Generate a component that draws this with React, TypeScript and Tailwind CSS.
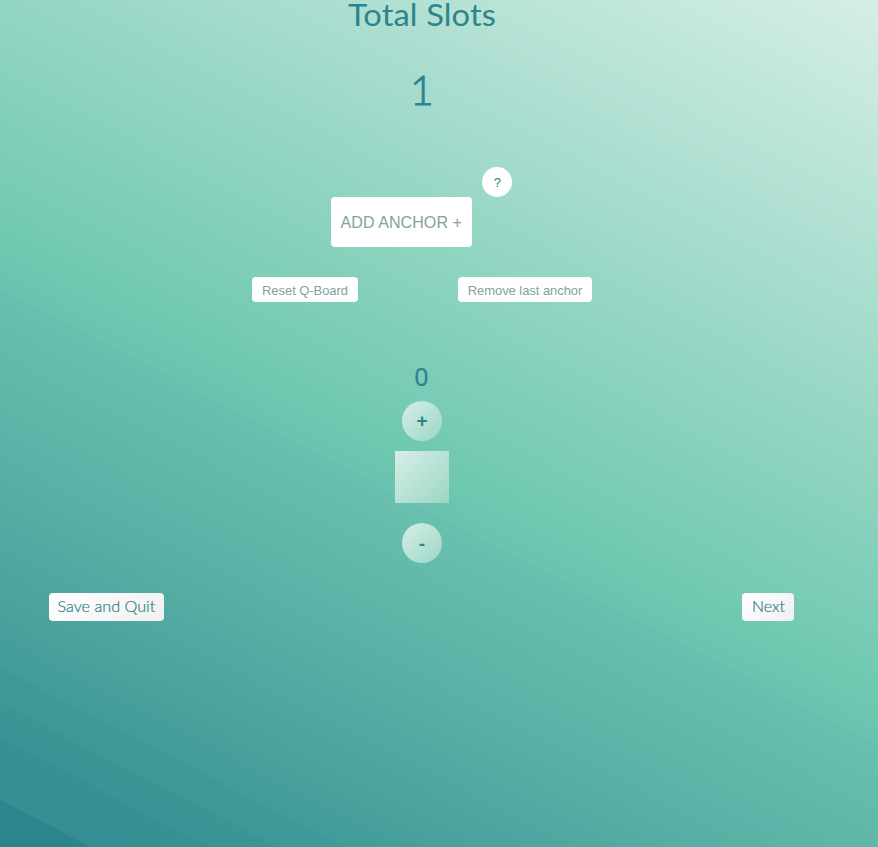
const softFill = 'bg-linear-135 from-[#d6eee7] to-[#9bd7c6]';
const secondary =
  "h-[25px] rounded-[4px] bg-white pt-[2px] text-center font-['Liberation_Sans',sans-serif] text-[13px] leading-[23px] tracking-[-0.06px] whitespace-nowrap text-[#83a29c]";
const footerButton =
  'flex h-7 justify-center rounded-[4px] bg-linear-135 from-white to-[#f0f0f0] text-[15px] leading-[26px] font-light whitespace-nowrap text-[#2a8084] [-webkit-text-stroke:0.2px]';
const stepButton =
  "size-10 rounded-full font-['Liberation_Sans',sans-serif] text-[19px] font-bold";

export default function App() {
  return (
    <main className="h-[847px] w-[878px] overflow-hidden bg-[linear-gradient(27.5deg,#2c848c_0%,#2c848c_3.6%,#368e92_3.65%,#389093_8.35%,#3b9395_8.4%,#3c9495_11%,#3f9797_11.1%,#409898_13.7%,#439b9a_13.8%,#58aea4_28%,#69c0ae_42.8%,#6bc2b0_42.9%,#6fc8b0_46.4%,#d6eee7_100%)] font-['Lato',sans-serif] text-[#2d848c]">
      <div className="flex w-[844px] flex-col items-center">
        <h1 className="h-[67px] scale-x-[1.09] text-[30px] leading-[29px] tracking-[0.1px] whitespace-nowrap">Total Slots</h1>
        <div className="h-[100px] text-[41px] leading-[46px] font-light [-webkit-text-stroke:0.9px]">1</div>

        <div className="flex h-20 items-start">
          <button className="mt-[30px] ml-[-0.5px] h-[50px] w-[141px] rounded-[4px] bg-white pt-px pr-px font-['Liberation_Sans',sans-serif] text-[16px] leading-[49px] tracking-[0.08px] whitespace-nowrap text-[#83a29c]">
            ADD ANCHOR +
          </button>
          <button className="ml-[10px] size-[30px] rounded-full bg-white pt-px font-['Liberation_Sans',sans-serif] text-[13px] leading-[29px] text-[#2a8084]">
            ?
          </button>
        </div>

        <div className="mt-[30px] flex justify-center gap-[100px]">
          <button className={`${secondary} w-[106px]`}>Reset Q-Board</button>
          <button className={`${secondary} w-[134px]`}>Remove last anchor</button>
        </div>

        <section className="mt-[60px] flex flex-col items-center">
          <div className="h-[39px] pr-px font-['Noto_Sans',sans-serif] text-[25px] leading-[28px] [-webkit-text-stroke:0.2px]">0</div>
          <button className={`${softFill} ${stepButton} leading-10`}>+</button>
          <div className={`${softFill} mt-[10px] h-[52px] w-[54px]`} />
          <button className={`${softFill} ${stepButton} mt-5 pt-[2px] leading-[38px]`}>-</button>
        </section>

        <footer className="mt-[30px] flex w-full justify-between pr-[50px] pl-[49px]">
          <button className={`${footerButton} w-[115px]`}>
            <span className="scale-x-[1.08]">Save and Quit</span>
          </button>
          <button className={`${footerButton} w-[52px]`}>
            <span className="scale-x-[1.06]">Next</span>
          </button>
        </footer>
      </div>
    </main>
  );
}
